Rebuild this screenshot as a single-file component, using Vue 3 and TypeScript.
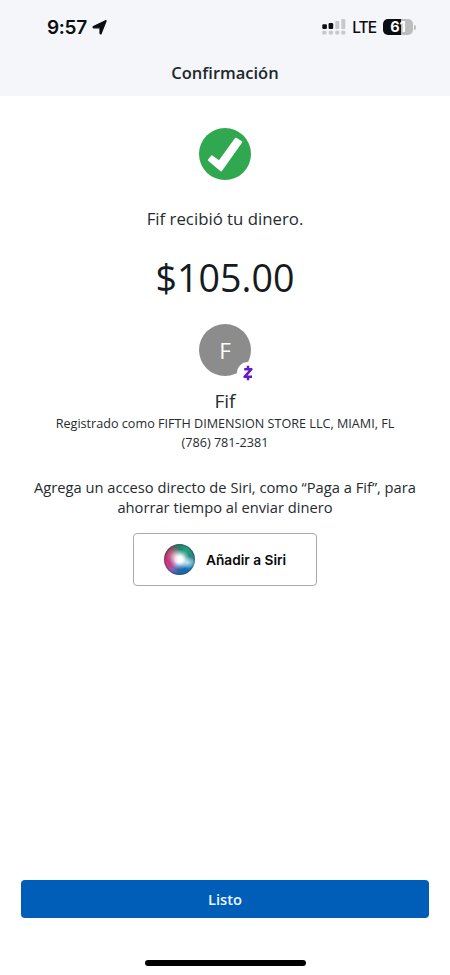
<script setup lang="ts">
const payment = {
  recipient: 'Fif',
  amount: '$105.00',
  registered: 'Registrado como FIFTH DIMENSION STORE LLC, MIAMI, FL',
  phone: '(786) 781-2381',
}
</script>

<template>
  <div class="screen">
    <header class="top">
      <div class="status">
        <div class="clock">
          <span class="time">9:57</span>
          <svg class="location" viewBox="0 0 15 15">
            <path d="M14 1.2 9.2 13.4c-.3.7-1.2.6-1.2-.2V7.8H1.8c-.8 0-1-.9-.3-1.2L13.4 .7c.5-.2.8 0 .6.5Z" fill="#0c0d10" stroke="#0c0d10" stroke-width="1.2" stroke-linejoin="round" />
          </svg>
        </div>
        <div class="indicators">
          <svg class="signal" viewBox="0 0 24 17">
            <g fill="#0c0d10">
              <rect x="0.3" y="5.3" width="4.6" height="4.6" rx="1.2" />
              <rect x="6.6" y="4.1" width="4.6" height="5.8" rx="1.2" />
            </g>
            <g fill="#c6c8ca">
              <rect x="13.2" y="2" width="4" height="8" rx="1" />
              <rect x="19.3" y="0" width="4" height="10" rx="1" />
              <rect x="0.3" y="11.8" width="4.2" height="3.6" rx="1" />
              <rect x="6.8" y="11.8" width="4.2" height="3.6" rx="1" />
              <rect x="13.2" y="11.8" width="4" height="3.6" rx="1" />
              <rect x="19.3" y="11.8" width="4" height="3.6" rx="1" />
            </g>
          </svg>
          <span class="network">LTE</span>
          <div class="battery"><span>61</span></div>
          <i class="battery-cap"></i>
        </div>
      </div>
      <h1>Confirmación</h1>
    </header>

    <main>
      <svg class="success" viewBox="0 0 52 52">
        <circle cx="26" cy="26" r="26" fill="#2fa84f" />
        <path d="M9.7 32 12.8 28.2 20.2 33.6 36.8 10.6 42.4 14 22.2 42.6Z" fill="#fff" stroke="#fff" stroke-width="1.8" stroke-linejoin="round" />
      </svg>
      <p class="message">{{ payment.recipient }} recibió tu dinero.</p>
      <p class="amount">{{ payment.amount }}</p>
      <div class="avatar">
        <span>{{ payment.recipient.charAt(0) }}</span>
        <div class="badge">
          <svg viewBox="0 0 10 16">
            <path d="M1.2 4.2H8.4L1.6 11.8H9M5 .8V4.2M5 11.8v3.4" fill="none" stroke="#641cc4" stroke-width="2.5" stroke-linejoin="round" />
          </svg>
        </div>
      </div>
      <h2>{{ payment.recipient }}</h2>
      <p class="detail">{{ payment.registered }}</p>
      <p class="detail">{{ payment.phone }}</p>
      <p class="hint">Agrega un acceso directo de Siri, como “Paga a Fif”, para<br />ahorrar tiempo al enviar dinero</p>
      <button class="siri" type="button">
        <i class="orb"></i>
        <span>Añadir a Siri</span>
      </button>
    </main>

    <footer>
      <button class="done" type="button">Listo</button>
      <div class="home"></div>
    </footer>
  </div>
</template>

<style>
body {
  background: #fff;
}
</style>

<style scoped>
.screen {
  display: flex;
  flex-direction: column;
  width: 450px;
  height: 975px;
  overflow: hidden;
  background: #fff;
  color: #252b30;
  font-family: "Open Sans", "Noto Sans", sans-serif;
}
h1, h2, p {
  margin: 0;
  white-space: nowrap;
}
button {
  box-sizing: border-box;
  padding: 0;
  font-family: inherit;
}
.top {
  height: 96px;
  background: #f4f6f9;
}
.status {
  display: flex;
  justify-content: space-between;
  height: 54px;
  padding: 0 34px 0 47px;
  color: #0c0d10;
  font-family: Inter, sans-serif;
}
.clock,
.indicators {
  display: flex;
  align-items: center;
  height: 54px;
}
.time {
  padding-top: 2px;
  font-size: 19px;
  font-weight: 600;
  line-height: 24px;
  letter-spacing: -0.3px;
}
.location {
  width: 15px;
  height: 15px;
  margin-left: 5px;
}
.signal {
  width: 24px;
  height: 17px;
}
.network {
  margin-left: 6px;
  padding-top: 1px;
  font-size: 15.5px;
  font-weight: 500;
  letter-spacing: -1px;
}
.battery {
  width: 30px;
  height: 16px;
  margin-left: 7px;
  border-radius: 5px;
  background: linear-gradient(90deg, #0c0d10 61%, #babcbe 61%);
  color: #fff;
  font-size: 14.5px;
  font-weight: 700;
  line-height: 16px;
  text-align: center;
}
.battery-cap {
  width: 2px;
  height: 5px;
  margin-left: 1px;
  border-radius: 0 2px 2px 0;
  background: #babcbe;
}
h1 {
  color: #20272c;
  font-size: 16.5px;
  font-weight: 600;
  line-height: 38px;
  text-align: center;
}
main {
  display: flex;
  flex: 1;
  flex-direction: column;
  align-items: center;
  padding-top: 32px;
}
.success {
  width: 52px;
  height: 52px;
}
.message {
  margin-top: 27px;
  font-size: 16.8px;
  line-height: 24px;
}
.amount {
  margin-top: 21px;
  color: #151b20;
  font-size: 37.6px;
  line-height: 52px;
}
.avatar {
  position: relative;
  width: 52px;
  height: 52px;
  margin-top: 20px;
  border-radius: 50%;
  background: #8c8c8d;
  color: #fff;
  font-size: 22.5px;
  line-height: 53px;
  text-align: center;
}
.badge {
  position: absolute;
  top: 38px;
  left: 38px;
  display: flex;
  align-items: center;
  justify-content: center;
  width: 22px;
  height: 22px;
  border-radius: 50%;
  background: #fff;
}
.badge svg {
  width: 10px;
  height: 16px;
}
h2 {
  margin-top: 12px;
  font-size: 19px;
  font-weight: 400;
  line-height: 26px;
}
.detail {
  font-size: 12.62px;
  line-height: 19px;
}
.hint {
  margin-top: 25px;
  font-size: 14.7px;
  line-height: 20px;
  text-align: center;
}
.siri {
  display: flex;
  align-items: center;
  width: 184px;
  height: 53px;
  margin-top: 16px;
  padding-left: 30px;
  border: 1px solid #a9a9aa;
  border-radius: 4px;
  background: #fff;
  color: #090909;
  font-family: Inter, sans-serif;
  font-size: 13.7px;
  font-weight: 600;
}
.orb {
  width: 31px;
  height: 31px;
  margin-right: 11px;
  border-radius: 50%;
  background:
    radial-gradient(circle at 51% 50%, #fff 0 10%, #ffffffd0 19%, #d5eaff66 32%, #ffffff00 46%),
    radial-gradient(ellipse at 76% 60%, #e5f3ffc0, #ffffff00 24%),
    radial-gradient(ellipse at 35% 38%, #f0cddda0, #ffffff00 30%),
    radial-gradient(circle, #0000 60%, #28344f88 71%),
    conic-gradient(from 0deg at 50% 50%, #20856b, #25a17c 35deg, #2b887c 75deg, #3a98bc 105deg, #126eb0 145deg, #2468ac 185deg, #8761b0 215deg, #d0388a 245deg, #bf356c 285deg, #8b4b5d 322deg, #20856b);
}
footer {
  display: flex;
  flex-direction: column;
  align-items: center;
  height: 95px;
}
.done {
  width: 408px;
  height: 38px;
  border: 0;
  border-radius: 4px;
  background: #005eb8;
  color: #edf6ff;
  font-size: 14.7px;
  font-weight: 600;
}
.home {
  width: 161px;
  height: 6px;
  margin-top: 42px;
  border-radius: 3px;
  background: #000;
}
</style>
